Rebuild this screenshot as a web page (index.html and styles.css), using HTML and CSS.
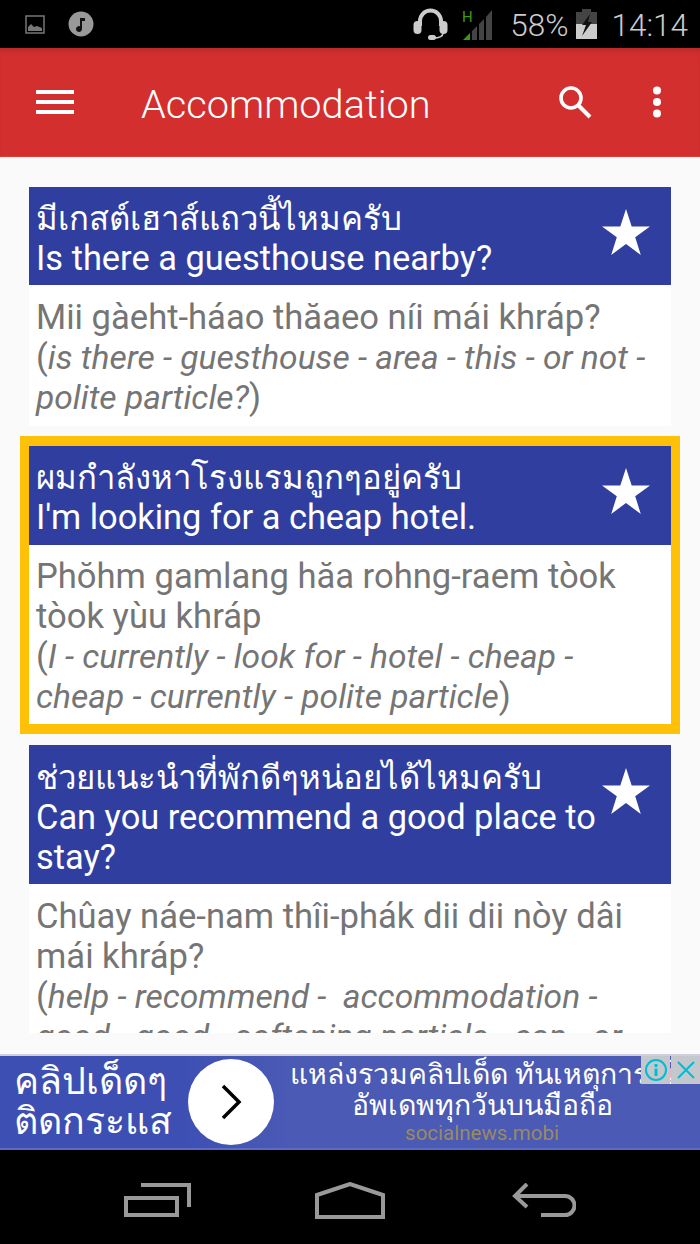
FILE: index.html
```html
<!doctype html>
<html>
<head>
<meta charset="utf-8">
<title>Accommodation</title>
<link rel="stylesheet" href="styles.css">
</head>
<body>
<div class="app">
	<div class="status">
		<div class="status-left">
			<svg width="24" height="24" viewBox="0 0 24 24"><path d="M3 4h18v17H3z" fill="none" stroke="#777" stroke-width="1.500"/><path d="M5 19v-4l3-3 3 3 3-1 5 2v3z" fill="#777"/></svg>
			<svg width="26" height="26" viewBox="0 0 26 26"><circle cx="13" cy="13" r="12.500" fill="#999"/><path d="M12 7h5v3h-3v8a3 3 0 1 1-2-2.800z" fill="#111"/></svg>
		</div>
		<div class="status-right">
			<svg class="ic-head" width="35" height="33" viewBox="0 0 35 33"><path d="M7 18V13a10.500 10.500 0 0 1 21 0v5" fill="none" stroke="#ccc" stroke-width="4"/><rect x="0.500" y="13" width="8" height="13" rx="4" fill="#ccc"/><rect x="26.500" y="13" width="8" height="13" rx="4" fill="#ccc"/><path d="M30 25c0 4-5 5-10 5" fill="none" stroke="#ccc" stroke-width="1.500"/><rect x="15" y="27" width="8" height="5" rx="2.500" fill="#ccc"/></svg>
			<svg class="ic-signal" width="31" height="31" viewBox="0 0 31 31"><path d="M1 31l7-7v7z" fill="#3a9a10"/><path d="M10 31V22l5-5v14zM17 31V15l5-5v21zM24 31V8l6-7v30z" fill="#444"/><text x="0" y="13" class="sig-h">H</text></svg>
			<span class="pct">58%</span>
			<svg class="ic-batt" width="21" height="30" viewBox="0 0 21 30"><path d="M6 0h9v3h6v27H0V3h6z" fill="#444"/><path d="M0 15h21v15H0z" fill="#ccc"/><path d="M14 5L6 16h4l-4 11 10-14h-4z" fill="#111"/></svg>
			<span class="time">14:14</span>
		</div>
	</div>

	<div class="toolbar">
		<svg class="menu-ic" width="38" height="26" viewBox="0 0 38 26"><path d="M0 1h38v4H0zM0 11h38v4H0zM0 21h38v4H0z" fill="#fff"/></svg>
		<div class="title">Accommodation</div>
		<svg class="search-ic" width="36" height="36" viewBox="0 0 36 36"><circle cx="14" cy="14" r="10" fill="none" stroke="#fff" stroke-width="3.600"/><path d="M21 21l12 12" stroke="#fff" stroke-width="4"/></svg>
		<svg class="more-ic" width="10" height="32" viewBox="0 0 10 32"><circle cx="5" cy="4.500" r="4" fill="#fff"/><circle cx="5" cy="16" r="4" fill="#fff"/><circle cx="5" cy="27.500" r="4" fill="#fff"/></svg>
	</div>

	<div class="content">
		<div class="list">
			<div class="card">
				<div class="card-head">
					<div class="head-text"><span class="th">มีเกสต์เฮาส์แถวนี้ไหมครับ</span><br>Is there a guesthouse nearby?</div>
					<svg class="star" width="48" height="46" viewBox="0 0 48 46"><path d="M24 0l5.700 17.400H48L33.200 28.200 38.800 46 24 35 9.200 46l5.600-17.800L0 17.400h18.300z" fill="#fff"/></svg>
				</div>
				<div class="card-body">Mii gàeht-háao thăaeo níi mái khráp?<br>(<i>is there - guesthouse - area - this - or not - polite particle?</i>)</div>
			</div>

			<div class="card active">
				<div class="card-head">
					<div class="head-text"><span class="th">ผมกำลังหาโรงแรมถูกๆอยู่ครับ</span><br>I'm looking for a cheap hotel.</div>
					<svg class="star" width="48" height="46" viewBox="0 0 48 46"><path d="M24 0l5.700 17.400H48L33.200 28.200 38.800 46 24 35 9.200 46l5.600-17.800L0 17.400h18.300z" fill="#fff"/></svg>
				</div>
				<div class="card-body">Phŏhm gamlang hăa rohng-raem tòok tòok yùu khráp<br>(<i>I - currently - look for - hotel - cheap - cheap - currently - polite particle</i>)</div>
			</div>

			<div class="card">
				<div class="card-head">
					<div class="head-text"><span class="th">ช่วยแนะนำที่พักดีๆหน่อยได้ไหมครับ</span><br>Can you recommend a good place to stay?</div>
					<svg class="star" width="48" height="46" viewBox="0 0 48 46"><path d="M24 0l5.700 17.400H48L33.200 28.200 38.800 46 24 35 9.200 46l5.600-17.800L0 17.400h18.300z" fill="#fff"/></svg>
				</div>
				<div class="card-body">Chûay náe-nam thîi-phák dii dii nòy dâi mái khráp?<br>(<i>help - recommend - &nbsp;accommodation - good - good - softening particle - can - or not - polite particle</i>)</div>
			</div>
		</div>
	</div>

	<div class="ad">
		<div class="ad-left">คลิปเด็ดๆ<br>ติดกระแส</div>
		<div class="ad-btn"><svg width="22" height="36" viewBox="0 0 22 36"><path d="M3 2l16 16L3 34" fill="none" stroke="#000" stroke-width="3.500"/></svg></div>
		<div class="ad-right">
			<div>แหล่งรวมคลิปเด็ด ทันเหตุการณ์<br>อัพเดพทุกวันบนมือถือ</div>
			<div class="ad-site">socialnews.mobi</div>
		</div>
		<div class="ad-badges">
			<span class="ad-badge"><svg width="24" height="24" viewBox="0 0 24 24"><circle cx="12" cy="12" r="10" fill="none" stroke="#00bcd4" stroke-width="2"/><path d="M10.500 6h3v3h-3zM10.500 10.500h3V18h-3z" fill="#00bcd4"/></svg></span>
			<span class="ad-badge"><svg width="20" height="20" viewBox="0 0 20 20"><path d="M2 2l16 16M18 2L2 18" stroke="#00bcd4" stroke-width="2"/></svg></span>
		</div>
	</div>

	<div class="navbar">
		<svg class="nav-recent" width="67" height="34" viewBox="0 0 67 34"><path d="M2 15h51v17H2z" fill="none" stroke="#999" stroke-width="4"/><path d="M17 2h48v22" fill="none" stroke="#999" stroke-width="4"/></svg>
		<svg class="nav-home" width="70" height="37" viewBox="0 0 70 37"><path d="M2 13L35 2l33 11v22H2z" fill="none" stroke="#999" stroke-width="4"/></svg>
		<svg width="64" height="34" viewBox="0 0 64 34"><path d="M15 1L3 13l12 11M3 13h50a9.500 9.500 0 0 1 0 19H29" fill="none" stroke="#999" stroke-width="4"/></svg>
	</div>
</div>
</body>
</html>
```

FILE: styles.css
```css
* {margin:0; padding:0; box-sizing:border-box;}
html, body {width:700px; height:1244px; overflow:hidden;}
body {font-family:Roboto, "Noto Sans", "Noto Sans CJK SC", sans-serif; background:#000;}
.app {display:flex; flex-direction:column; width:700px; height:1244px;}

.status {height:48px; background:#000; display:flex; justify-content:space-between; align-items:center; padding:0 12px 0 23px; color:#ccc;}
.status-left {display:flex; align-items:center; gap:21px;}
.status-right {display:flex; align-items:center;}
.ic-head {margin-right:14px;}
.ic-signal {margin-right:17px;}
.sig-h {font:15px Roboto, sans-serif; fill:#3a9a10;}
.pct {font-size:31.500px; font-weight:300; margin-right:8px; margin-top:3px;}
.ic-batt {margin-right:14px;}
.time {font-size:31.500px; font-weight:300; margin-top:3px;}

.toolbar {height:109px; background:#d32f2f; border-bottom:1px solid #e53935; box-shadow:inset 0 6px 6px -4px rgba(0,0,0,.15); display:flex; align-items:center; padding:0 0 0 36px; color:#fff;}
.menu-ic {margin-right:67px;}
.title {font-size:39.700px; font-weight:300; flex:1; padding-top:5px;}
.search-ic {margin-right:59px;}
.more-ic {margin-right:38px;}

.content {height:897px; background:#fafafa; padding:30px 0 21px;}
.list {height:846px; overflow:hidden; padding:0 29px;}
.card {margin-bottom:10px;}
.card-head {background:#303f9f; color:#fff; display:flex; justify-content:space-between; align-items:flex-start; padding:11px 21px 7px 7px; font-size:34.400px; line-height:40px;}
.th {font-size:32.900px; line-height:1;}
.head-text {flex:1;}
.star {flex:none; margin-top:11px;}
.card-body {background:#fff; color:#757575; padding:12px 7px 9px; font-size:34.600px; line-height:40px;}
.card-body i {font-size:33.600px; line-height:1;}
.card.active {margin:0 -9px 11px; border:10px solid #ffc107; border-width:10px 9px;}
.active .card-head {padding-bottom:8px;}
.active .card-body {padding:11px 7px 8px;}
.card:last-child .card-head {padding-top:12px;}

.ad {height:96px; background:linear-gradient(90deg, #3d4fb3 180px, #4a5ab5 290px); border-top:2px solid #d0d0d8; border-bottom:2px solid #5a6cc4; display:flex; align-items:center; position:relative; color:#fff; overflow:hidden;}
.ad-left {width:188px; height:100%; padding:5px 0 0 14px; font-size:37.500px; line-height:40px; white-space:nowrap;}
.ad-btn {width:86px; height:86px; background:#fff; border-radius:50%; display:flex; align-items:center; justify-content:center; flex:none;}
.ad-right {flex:1; text-align:center; font-size:28.400px; line-height:31px; padding:0 10px 0 0; white-space:nowrap;}
.ad-site {color:#9a8a62; font-size:20.500px; line-height:24px;}
.ad-badges {position:absolute; right:0; top:0; display:flex; gap:1px;}
.ad-badge {width:29px; height:28px; background:#c4c8cc; display:flex; align-items:center; justify-content:center;}

.navbar {flex:1; background:#000; display:flex; align-items:center; padding:6px 0 0 124px;}
.nav-recent {margin-right:124px;}
.nav-home {margin-right:127px;}
```
